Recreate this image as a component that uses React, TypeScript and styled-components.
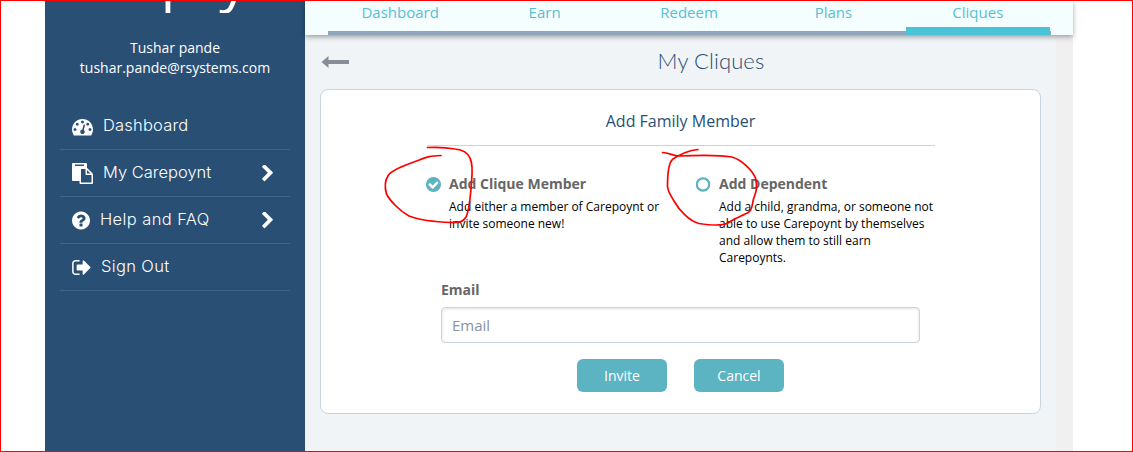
import React from 'react';
import styled, { createGlobalStyle } from 'styled-components';

const GlobalStyle = createGlobalStyle`
  * { box-sizing: border-box; }
  body { margin: 0; background: #fff; font-family: 'Open Sans', 'Liberation Sans', sans-serif; }
`;

const Frame = styled.div`
  position: relative;
  width: 1133px;
  height: 452px;
  padding-left: 44px;
  border: 1px solid #f00;
  display: flex;
  overflow: hidden;
  background: #fff;
`;

const Sidebar = styled.aside`
  width: 260px;
  height: 100%;
  flex: none;
  background: #294f75;
  color: #fff;
`;

const Logo = styled.div`
  height: 12px;
  margin-bottom: 25px;
  overflow: hidden;
  display: flex;
  align-items: flex-end;
  justify-content: center;
  padding-left: 5px;
  font: 400 57px/70px 'Open Sans', sans-serif;
  letter-spacing: -5.3px;
  white-space: nowrap;
`;

const User = styled.div`
  height: 65px;
  font-size: 14px;
  line-height: 20px;
  text-align: center;
`;

const Menu = styled.nav`
  padding: 0 15px;
`;

const MenuItem = styled.a<{ $gap: number }>`
  display: flex;
  align-items: center;
  gap: ${(p) => p.$gap}px;
  height: 47px;
  padding: 0 17px 0 12px;
  border-bottom: 1px solid #436486;
`;

const MenuLabel = styled.span<{ $spacing: number }>`
  flex: 1;
  padding-bottom: 2px;
  font: 300 16.5px/24px Inter, sans-serif;
  letter-spacing: ${(p) => p.$spacing}px;
  white-space: nowrap;
`;

const Glyph = styled.svg`
  display: block;
  flex: none;
  fill: currentColor;
`;

const Main = styled.main`
  width: 768px;
  flex: none;
  background: #f0f0f0;
`;

const TopNav = styled.div`
  position: relative;
  height: 34px;
  padding: 0 22px 0 23px;
  background: #f5feff;
  box-shadow: 0 2px 5px rgba(0, 0, 0, 0.35);
`;

const Tabs = styled.div`
  display: flex;
  height: 34px;
  border-bottom: 4px solid #8ea5bc;
  padding-right: 1px;
`;

const Tab = styled.a<{ $active?: boolean }>`
  flex: 1;
  height: 34px;
  border-bottom: ${(p) => (p.$active ? '8px solid #4ac3d9' : 'none')};
  text-align: center;
  font-size: 15px;
  line-height: 22px;
  color: #56bfd4;
`;

const Content = styled.section`
  width: 751px;
  height: 416px;
  padding: 0 15px;
  background: #f0f4f7;
`;

const TitleBar = styled.header`
  display: grid;
  grid-template-columns: 60px 1fr;
  align-items: center;
  height: 54px;
  padding-left: 1px;
  color: #868f97;
`;

const Title = styled.h1`
  margin: 0;
  padding-bottom: 2px;
  text-align: center;
  font: 300 22px/28px Lato, sans-serif;
  letter-spacing: 0.1px;
  color: #294f75;
`;

const Card = styled.div`
  width: 721px;
  height: 325px;
  padding: 17px 105px 0 106px;
  border: 1px solid #c9d5de;
  border-radius: 8px;
  background: #fff;
`;

const CardTitle = styled.h2`
  height: 39px;
  margin: 0;
  padding-right: 1px;
  border-bottom: 1px solid #c9d5de;
  text-align: center;
  font-size: 16px;
  line-height: 29px;
  font-weight: 400;
  color: #294f75;
`;

const Options = styled.div`
  display: grid;
  grid-template-columns: 270px 245px;
  height: 133px;
  padding-top: 28px;
  margin: 0 -8px 0 -1px;
`;

const Option = styled.div`
  display: flex;
  gap: 8px;
  color: #5cb3c1;
`;

const OptionMark = styled.div`
  padding-top: 3px;
`;

const OptionName = styled.div`
  font-size: 14px;
  line-height: 20px;
  font-weight: 700;
  color: #666;
`;

const OptionText = styled.p`
  margin: 4px 0 0;
  font-size: 12px;
  line-height: 17px;
  color: #000;
  white-space: nowrap;
`;

const Form = styled.div`
  margin: 0 15px 0 14px;
`;

const FieldLabel = styled.label`
  display: block;
  height: 28px;
  font-size: 14px;
  line-height: 22px;
  font-weight: 700;
  color: #666;
`;

const Input = styled.input`
  display: block;
  width: 100%;
  height: 36px;
  padding: 0 10px;
  border: 1px solid #c9d5de;
  border-radius: 4px;
  box-shadow: inset 0 1px 3px rgba(0, 0, 0, 0.12);
  background: #fff;
  font: 400 15px 'Open Sans', sans-serif;
  &::placeholder { color: #8993a3; opacity: 1; }
`;

const Actions = styled.div`
  display: flex;
  justify-content: center;
  gap: 27px;
  padding-top: 16px;
`;

const Button = styled.button`
  width: 90px;
  height: 33px;
  padding: 0;
  border: 0;
  border-radius: 6px;
  background: #5cb3c1;
  color: #fff;
  font: 400 14px 'Open Sans', sans-serif;
`;

const Markup = styled.svg`
  position: absolute;
  left: -1px;
  top: -1px;
  pointer-events: none;
`;

const disc =
  'M1664 896q0 209-103 385.5t-279.5 279.5-385.5 103-385.5-103-279.5-279.5-103-385.5 103-385.5 279.5-279.5 385.5-103 385.5 103 279.5 279.5 103 385.5z';

const icons = {
  gauge: 'M384 1152q0-53-37.5-90.5t-90.5-37.5-90.5 37.5-37.5 90.5 37.5 90.5 90.5 37.5 90.5-37.5 37.5-90.5zm192-448q0-53-37.5-90.5t-90.5-37.5-90.5 37.5-37.5 90.5 37.5 90.5 90.5 37.5 90.5-37.5 37.5-90.5zm428 481l101-382q6-26-7.5-48.5t-38.5-29.5-48 6.5-30 39.5l-101 382q-60 5-107 43.5t-63 98.5q-20 77 20 146t117 89 146-20 89-117q16-60-6-117t-72-91zm660-33q0-53-37.5-90.5t-90.5-37.5-90.5 37.5-37.5 90.5 37.5 90.5 90.5 37.5 90.5-37.5 37.5-90.5zm-640-640q0-53-37.5-90.5t-90.5-37.5-90.5 37.5-37.5 90.5 37.5 90.5 90.5 37.5 90.5-37.5 37.5-90.5zm448 192q0-53-37.5-90.5t-90.5-37.5-90.5 37.5-37.5 90.5 37.5 90.5 90.5 37.5 90.5-37.5 37.5-90.5zm320 448q0 261-141 483-19 29-54 29h-1402q-35 0-54-29-141-221-141-483 0-182 71-348t191-286 286-191 348-71 348 71 286 191 191 286 71 348z',
  paste: 'M768 1664h896v-640h-416q-40 0-68-28t-28-68v-416h-384v1152zm256-1440v-64q0-13-9.5-22.5t-22.5-9.5h-704q-13 0-22.5 9.5t-9.5 22.5v64q0 13 9.5 22.5t22.5 9.5h704q13 0 22.5-9.5t9.5-22.5zm256 672h299l-299-299v299zm512 128v672q0 40-28 68t-68 28h-960q-40 0-68-28t-28-68v-160h-544q-40 0-68-28t-28-68v-1344q0-40 28-68t68-28h1088q40 0 68 28t28 68v328q21 13 36 28l408 408q28 28 48 76t20 88z',
  help: 'M1024 1376v-192q0-14-9-23t-23-9h-192q-14 0-23 9t-9 23v192q0 14 9 23t23 9h192q14 0 23-9t9-23zm256-672q0-88-55.5-163t-138.5-116-170-41q-243 0-371 213-15 24 8 42l132 100q7 6 19 6 16 0 25-12 53-68 86-92 34-24 86-24 48 0 85.5 26t37.5 59q0 38-20 61t-68 45q-63 28-115.5 86.5t-52.5 125.5v36q0 14 9 23t23 9h192q14 0 23-9t9-23q0-19 21.5-49.5t54.5-49.5q32-18 49-28.5t46-35 44.5-48 28-60.5 12.5-81z' + disc,
  signOut: 'M704 1440q0 4 1 20t.5 26.5-3 23.5-10 19.5-20.5 6.5h-320q-119 0-203.5-84.5t-84.5-203.5v-704q0-119 84.5-203.5t203.5-84.5h320q13 0 22.5 9.5t9.5 22.5q0 4 1 20t.5 26.5-3 23.5-10 19.5-20.5 6.5h-320q-66 0-113 47t-47 113v704q0 66 47 113t113 47h312l11.5 1 11.5 3 8 5.5 7 9 2 13.5zm928-544q0 26-19 45l-544 544q-19 19-45 19t-45-19-19-45v-288h-448q-26 0-45-19t-19-45v-384q0-26 19-45t45-19h448v-288q0-26 19-45t45-19 45 19l544 544q19 19 19 45z',
  chevron: 'M1363 877l-742 742q-19 19-45 19t-45-19l-166-166q-19-19-19-45t19-45l531-531-531-531q-19-19-19-45t19-45l166-166q19-19 45-19t45 19l742 742q19 19 19 45t-19 45z',
  check: 'M1412 734q0-28-18-46l-91-90q-19-19-45-19t-45 19l-408 407-226-226q-19-19-45-19t-45 19l-91 90q-18 18-18 46 0 27 18 45l362 362q19 19 45 19 27 0 46-19l543-543q18-18 18-45z' + disc,
};

type IconName = keyof typeof icons;

const Icon = ({ name, w, h, box = '0 0 1792 1792' }: { name: IconName; w: number; h: number; box?: string }) => (
  <Glyph width={w} height={h} viewBox={box}>
    <path d={icons[name]} fillRule="evenodd" />
  </Glyph>
);

const menu: { label: string; icon: IconName; w: number; box?: string; gap: number; spacing: number; more?: boolean }[] = [
  { label: 'Dashboard', icon: 'gauge', w: 21, gap: 10, spacing: 0.2 },
  { label: 'My Carepoynt', icon: 'paste', w: 21, gap: 10, spacing: 0, more: true },
  { label: 'Help and FAQ', icon: 'help', w: 18, box: '128 0 1536 1792', gap: 10, spacing: 0.4, more: true },
  { label: 'Sign Out', icon: 'signOut', w: 19, box: '64 0 1600 1792', gap: 10, spacing: 0.35 },
];

const tabs = ['Dashboard', 'Earn', 'Redeem', 'Plans', 'Cliques'];

export default function App() {
  return (
    <Frame>
      <GlobalStyle />
      <Sidebar>
        <Logo>carepoynt</Logo>
        <User>
          <div>Tushar pande</div>
          <div>tushar.pande@rsystems.com</div>
        </User>
        <Menu>
          {menu.map((m) => (
            <MenuItem key={m.label} $gap={m.gap}>
              <Icon name={m.icon} w={m.w} h={21} box={m.box} />
              <MenuLabel $spacing={m.spacing}>{m.label}</MenuLabel>
              {m.more && <Icon name="chevron" w={11} h={17} box="340 130 1050 1530" />}
            </MenuItem>
          ))}
        </Menu>
      </Sidebar>
      <Main>
        <TopNav>
          <Tabs>
            {tabs.map((t) => (
              <Tab key={t} $active={t === 'Cliques'}>{t}</Tab>
            ))}
          </Tabs>
        </TopNav>
        <Content>
          <TitleBar>
            <Glyph width="28" height="12" viewBox="0 0 28 12">
              <path d="M0.5 6 7.5 0v4H28v4H7.5v4z" />
            </Glyph>
            <Title>My Cliques</Title>
          </TitleBar>
          <Card>
            <CardTitle>Add Family Member</CardTitle>
            <Options>
              <Option>
                <OptionMark><Icon name="check" w={15} h={15} box="128 128 1536 1536" /></OptionMark>
                <div>
                  <OptionName>Add Clique Member</OptionName>
                  <OptionText>Add either a member of Carepoynt or<br />invite someone new!</OptionText>
                </div>
              </Option>
              <Option>
                <OptionMark>
                  <Glyph width="15" height="15" viewBox="0 0 15 15">
                    <circle cx="7" cy="7.5" r="6.2" fill="none" stroke="currentColor" strokeWidth="2.2" />
                  </Glyph>
                </OptionMark>
                <div>
                  <OptionName>Add Dependent</OptionName>
                  <OptionText>
                    Add a child, grandma, or someone not<br />able to use Carepoynt by themselves<br />
                    and allow them to still earn<br />Carepoynts.
                  </OptionText>
                </div>
              </Option>
            </Options>
            <Form>
              <FieldLabel htmlFor="email">Email</FieldLabel>
              <Input id="email" placeholder="Email" />
              <Actions>
                <Button>Invite</Button>
                <Button>Cancel</Button>
              </Actions>
            </Form>
          </Card>
        </Content>
      </Main>
      <Markup width="1133" height="452" viewBox="0 0 1133 452" fill="none" stroke="#f00" strokeWidth="1.7" strokeLinecap="round" strokeLinejoin="round">
        <path d="M427.500 147.500C438 147 447 147.500 455 149C464 150 468 153 470 158C473 164 472.500 172 471.500 182C470.500 197 469 211 466 217C463 222 460 222.500 452 222.500C436 222 419 220 409 216C400 211 390 201 386.500 194C384.500 187 385 180 388.500 175C393 169 407 164.500 418 160.500C427 156.500 431 156 441 155.500" />
        <path d="M662.500 152.500C669 153 674 156 679 156C701 155 720 155 732 157C742 160 752 170 755.500 178C757.500 187 756.500 191 753.500 199C752 206 752 210 749 212C742 216 733 219 728 223C722 226 712 225.500 699 223.500C689 221 679 210 674 201C670 194 667.500 191 667.500 186C667.500 175 669 162 673 159C679 155 688 150.500 698 149.500" />
      </Markup>
    </Frame>
  );
}
